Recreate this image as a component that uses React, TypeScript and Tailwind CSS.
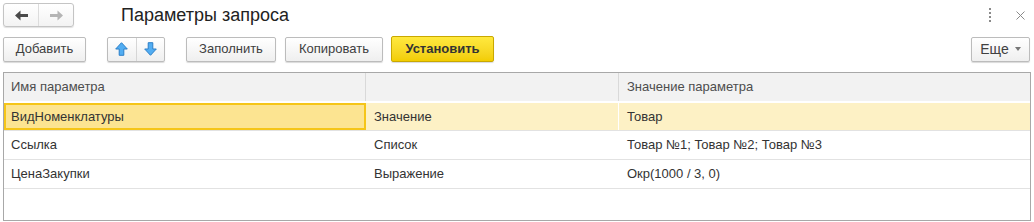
import React from "react";

const btn =
  "h-[25px] flex items-center justify-center rounded-[2px] border border-[#bcbcbc] bg-gradient-to-b from-white to-[#efefef] shadow-[0_1px_1px_rgba(0,0,0,0.15)] text-[13px] text-[#404040]";

const ArrowLeft = ({ color }: { color: string }) => (
  <svg width="13" height="11" viewBox="0 0 13 11">
    <path d="M0 5.5 L5.5 0.5 L5.5 4 L13 4 L13 7 L5.5 7 L5.5 10.5 Z" fill={color} />
  </svg>
);

const ArrowRight = ({ color }: { color: string }) => (
  <svg width="13" height="11" viewBox="0 0 13 11">
    <path d="M13 5.5 L7.5 0.5 L7.5 4 L0 4 L0 7 L7.5 7 L7.5 10.5 Z" fill={color} />
  </svg>
);

const BlueUp = () => (
  <svg width="13" height="14" viewBox="0 0 13 14">
    <path
      d="M6.5 0.7 L12.3 7 L8.8 7 L8.8 13.3 L4.2 13.3 L4.2 7 L0.7 7 Z"
      fill="#52adf2"
      stroke="#2b7fc8"
      strokeWidth="1"
      strokeLinejoin="round"
    />
  </svg>
);

const BlueDown = () => (
  <svg width="13" height="14" viewBox="0 0 13 14">
    <path
      d="M6.5 13.3 L12.3 7 L8.8 7 L8.8 0.7 L4.2 0.7 L4.2 7 L0.7 7 Z"
      fill="#52adf2"
      stroke="#2b7fc8"
      strokeWidth="1"
      strokeLinejoin="round"
    />
  </svg>
);

const rows = [
  { name: "ВидНоменклатуры", kind: "Значение", value: "Товар" },
  { name: "Ссылка", kind: "Список", value: "Товар №1; Товар №2; Товар №3" },
  { name: "ЦенаЗакупки", kind: "Выражение", value: "Окр(1000 / 3, 0)" },
];

export default function App() {
  return (
    <div className="w-[1034px] h-[222px] bg-white font-['Liberation_Sans',Arial,sans-serif] text-[#333] px-[3px] pt-[3px] overflow-hidden">
      {/* Header */}
      <div className="flex items-center h-[24px]">
        <div className="flex h-[24px] w-[71px] rounded-[3px] border border-[#c4c4c4] bg-gradient-to-b from-white to-[#f3f3f3] shadow-[0_1px_1px_rgba(0,0,0,0.12)]">
          <div className="flex-1 flex items-center justify-center border-r border-[#dcdcdc]">
            <ArrowLeft color="#4a4a4a" />
          </div>
          <div className="flex-1 flex items-center justify-center">
            <ArrowRight color="#b4b4b4" />
          </div>
        </div>
        <div className="ml-[47px] text-[18px] text-[#222] leading-none">Параметры запроса</div>
        <div className="flex-1" />
        <div className="flex flex-col gap-[2px] mr-[25px]">
          <span className="w-[2px] h-[2px] bg-[#8a8a8a]" />
          <span className="w-[2px] h-[2px] bg-[#8a8a8a]" />
          <span className="w-[2px] h-[2px] bg-[#8a8a8a]" />
          <span className="w-[2px] h-[2px] bg-[#8a8a8a]" />
        </div>
        <svg width="9" height="9" viewBox="0 0 9 9" className="mr-[6px]">
          <path d="M0.5 0.5 L8.5 8.5 M8.5 0.5 L0.5 8.5" stroke="#8a8a8a" strokeWidth="1" />
        </svg>
      </div>

      {/* Toolbar */}
      <div className="flex items-center mt-[9px]">
        <button className={`${btn} w-[83px]`}>Добавить</button>
        <div className="ml-[21px] flex h-[25px] w-[58px] rounded-[2px] border border-[#bcbcbc] bg-gradient-to-b from-white to-[#efefef] shadow-[0_1px_1px_rgba(0,0,0,0.15)]">
          <div className="flex-1 flex items-center justify-center border-r border-[#d6d6d6]">
            <BlueUp />
          </div>
          <div className="flex-1 flex items-center justify-center">
            <BlueDown />
          </div>
        </div>
        <button className={`${btn} ml-[21px] w-[90px]`}>Заполнить</button>
        <button className={`${btn} ml-[9px] w-[98px]`}>Копировать</button>
        <button className="ml-[8px] h-[26px] w-[103px] flex items-center justify-center rounded-[2px] border border-[#c9a800] bg-gradient-to-b from-[#ffe93d] to-[#f2cd00] shadow-[0_1px_1px_rgba(0,0,0,0.15)] text-[13px] font-bold text-[#333]">
          Установить
        </button>
        <div className="flex-1" />
        <button className={`${btn} w-[59px] mr-[1px] gap-[6px] !text-[14px]`}>
          <span>Еще</span>
          <span className="w-0 h-0 border-l-[3px] border-r-[3px] border-t-[4px] border-l-transparent border-r-transparent border-t-[#777]" />
        </button>
      </div>

      {/* Table */}
      <div className="mt-[10px] w-[1028px] h-[149px] border border-[#a8a8a8] text-[13px]">
        <div className="flex h-[30px] bg-[#f2f2f2] text-[#4d4d4d] border-b-2 border-white">
          <div className="w-[362px] flex items-center pl-[7px] border-r border-[#d9d9d9]">Имя параметра</div>
          <div className="w-[253px] border-r border-[#d9d9d9]" />
          <div className="flex-1 flex items-center pl-[8px]">Значение параметра</div>
        </div>
        <div className="flex h-[28px] bg-[#fdf1c5] border-b border-[#e2e2e2]">
          <div className="w-[362px] flex items-center pl-[5px] bg-[#fce491] border-2 border-[#f5c518]">
            ВидНоменклатуры
          </div>
          <div className="w-[253px] flex items-center pl-[8px] border-r border-white">Значение</div>
          <div className="flex-1 flex items-center pl-[8px]">Товар</div>
        </div>
        {rows.slice(1).map((r) => (
          <div key={r.name} className="flex h-[29px] border-b border-[#e2e2e2]">
            <div className="w-[362px] flex items-center pl-[7px]">{r.name}</div>
            <div className="w-[253px] flex items-center pl-[8px]">{r.kind}</div>
            <div className="flex-1 flex items-center pl-[8px]">{r.value}</div>
          </div>
        ))}
      </div>
    </div>
  );
}
